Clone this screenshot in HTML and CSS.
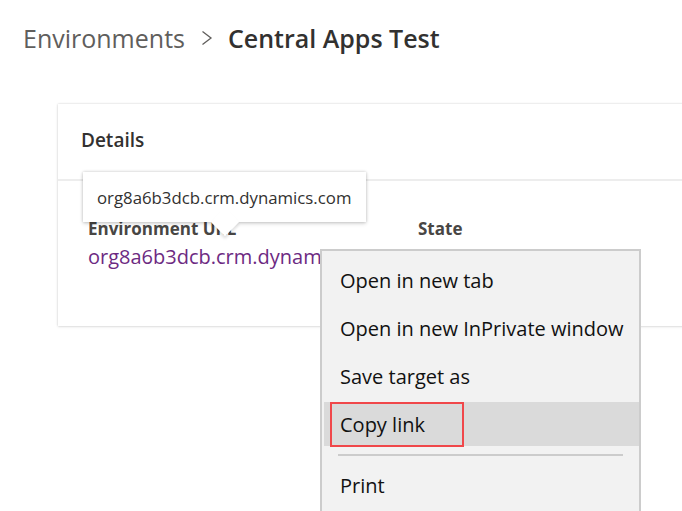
FILE: index.html
```html
<!DOCTYPE html>
<html lang="en">
<head>
<meta charset="utf-8">
<title>Central Apps Test</title>
<link rel="stylesheet" href="styles.css">
</head>
<body>
<div class="page">
  <nav class="breadcrumb">
    <span class="crumb">Environments</span>
    <svg class="chevron" width="12" height="16" viewBox="0 0 12 16"><path d="M1.5 1.5 L10 8 L1.5 14.5" fill="none" stroke="#605e5c" stroke-width="1.3"/></svg>
    <span class="current">Central Apps Test</span>
  </nav>

  <section class="card">
    <header class="card-header">
      <h2 class="card-title">Details</h2>
    </header>
    <div class="card-body">
      <div class="field field-url">
        <div class="field-label">Environment URL</div>
        <a class="field-link" href="#">org8a6b3dcb.crm.dynamics.com</a>
      </div>
      <div class="field field-state">
        <div class="field-label">State</div>
      </div>
    </div>
  </section>

  <div class="tooltip">
    <span class="tooltip-text">org8a6b3dcb.crm.dynamics.com</span>
    <span class="tooltip-beak"></span>
  </div>

  <ul class="context-menu">
    <li class="menu-item">Open in new tab</li>
    <li class="menu-item">Open in new InPrivate window</li>
    <li class="menu-item">Save target as</li>
    <li class="menu-item menu-item-active">Copy link<span class="annotation"></span></li>
    <li class="menu-separator"></li>
    <li class="menu-item">Print</li>
  </ul>
</div>
</body>
</html>
```

FILE: styles.css
```css
* { box-sizing: border-box; }

html, body {
  margin: 0;
  padding: 0;
  background: #ffffff;
  overflow: hidden;
}

body {
  font-family: "Open Sans", "Noto Sans", sans-serif;
  color: #323130;
}

.page {
  position: relative;
  width: 682px;
  height: 511px;
  overflow: hidden;
}

.breadcrumb {
  display: flex;
  align-items: center;
  padding: 18px 0 0 23px;
  height: 57px;
  font-size: 25px;
  line-height: 36px;
}

.crumb {
  color: #605e5c;
}

.chevron {
  margin: 0 15px 0 16px;
}

.current {
  font-weight: 600;
  color: #323130;
}

.card {
  margin: 47px 0 0 58px;
  width: 660px;
  background: #ffffff;
  box-shadow: 0 0 2px rgba(0,0,0,0.18), 0 1px 3px rgba(0,0,0,0.08);
}

.card-header {
  height: 77px;
  display: flex;
  align-items: center;
  padding: 0 0 3px 23px;
  border-bottom: 2px solid #ededed;
}

.card-title {
  margin: 0;
  font-size: 19px;
  font-weight: 600;
  color: #323130;
}

.card-body {
  display: flex;
  padding: 37px 0 55px 30px;
}

.field-url {
  width: 330px;
  white-space: nowrap;
}

.field-label {
  font-size: 17px;
  line-height: 22px;
  font-weight: 700;
  color: #484644;
}

.field-link {
  display: block;
  font-size: 20px;
  line-height: 28px;
  margin-top: 3px;
  color: #6d2a82;
  text-decoration: none;
}

.tooltip {
  position: absolute;
  left: 83px;
  top: 172px;
  width: 283px;
  height: 50px;
  background: #ffffff;
  box-shadow: 0 0 3px rgba(0,0,0,0.22), 0 2px 4px rgba(0,0,0,0.12);
  display: flex;
  align-items: center;
  padding-left: 14px;
}

.tooltip-text {
  font-size: 16.8px;
  color: #323130;
  position: relative;
  z-index: 2;
}

.tooltip-beak {
  position: absolute;
  left: 132px;
  top: 40px;
  width: 20px;
  height: 20px;
  background: #ffffff;
  transform: rotate(45deg);
  box-shadow: 2px 2px 3px rgba(0,0,0,0.12);
  z-index: 1;
}

.context-menu {
  position: absolute;
  left: 320px;
  top: 249px;
  width: 321px;
  height: 280px;
  margin: 0;
  padding: 7px 0 0 0;
  list-style: none;
  background: #f2f2f2;
  border: 2px solid #cccccc;
  font-size: 20px;
  color: #111111;
  display: flex;
  flex-direction: column;
  gap: 4px;
}

.menu-item {
  position: relative;
  flex: none;
  height: 44px;
  margin-left: 2px;
  padding-left: 16px;
  display: flex;
  align-items: center;
}

.menu-item-active {
  background: #dadada;
}

.annotation {
  position: absolute;
  left: 6px;
  top: 0;
  width: 134px;
  height: 45px;
  border: 2px solid #f0474a;
}

.menu-separator {
  flex: none;
  height: 2px;
  margin: 4px 16px 3px 16px;
  background: #cccccc;
}
```
